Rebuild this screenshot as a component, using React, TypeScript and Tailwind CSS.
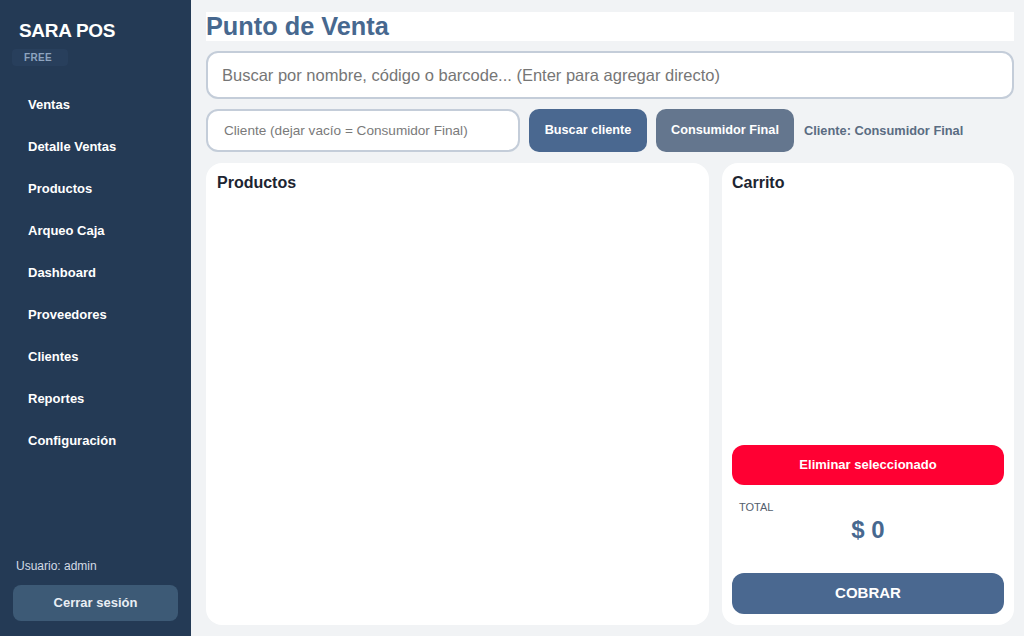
import { useState } from "react";

const NAV = [
  "Ventas",
  "Detalle Ventas",
  "Productos",
  "Arqueo Caja",
  "Dashboard",
  "Proveedores",
  "Clientes",
  "Reportes",
  "Configuración",
];

function Sidebar() {
  return (
    <aside className="w-[191px] shrink-0 bg-[#243a55] flex flex-col h-full">
      <div className="pl-[19px] pt-[20px]">
        <h1 className="text-[19px] leading-[22px] font-bold text-white tracking-[-0.3px]">
          SARA POS
        </h1>
        <span className="inline-block mt-[7px] -ml-[7px] pl-[12px] pr-[16px] py-[1px] rounded bg-[#283f5c] text-[10px] font-bold text-[#8ea4bf] tracking-[0.3px]">
          FREE
        </span>
      </div>

      {/* navigation */}
      <nav className="mt-[16px] flex flex-col">
        {NAV.map((item) => (
          <a
            key={item}
            className="pl-[28px] h-[42px] flex items-center text-[13px] font-bold text-white cursor-pointer"
          >
            {item}
          </a>
        ))}
      </nav>

      <div className="mt-auto px-[13px] pb-[15px]">
        <p className="pl-[3px] text-[12px] text-[#d3dbe5] leading-[14px]">Usuario: admin</p>
        <button className="mt-[12px] w-[165px] h-[36px] rounded-lg bg-[#3d5a76] text-[13px] font-bold text-[#e9eef4]">
          Cerrar sesión
        </button>
      </div>
    </aside>
  );
}

export default function App() {
  const [query, setQuery] = useState("");
  const [cliente, setCliente] = useState("");

  return (
    <div
      className="flex w-[1024px] h-[636px] bg-[#f1f3f5] overflow-hidden"
      style={{ fontFamily: '"Liberation Sans", Arial, sans-serif' }}
    >
      <Sidebar />

      <main className="flex-1 flex flex-col pl-[15px] pr-[10px] pt-[12px] pb-[11px] min-w-0">
        <div className="h-[29px] bg-white flex items-center">
          <h2 className="text-[25.3px] font-bold text-[#47688f] leading-none">Punto de Venta</h2>
        </div>

        <input
          value={query}
          onChange={(e) => setQuery(e.target.value)}
          placeholder="Buscar por nombre, código o barcode... (Enter para agregar directo)"
          className="mt-[10px] h-[48px] w-full rounded-xl border-2 border-[#c4cdd9] bg-white px-[14px] text-[16.5px] text-[#333] placeholder:text-[#767676] outline-none"
        />

        <div className="mt-[10px] flex items-center h-[43px]">
          <input
            value={cliente}
            onChange={(e) => setCliente(e.target.value)}
            placeholder="Cliente (dejar vacío = Consumidor Final)"
            className="w-[314px] h-[43px] rounded-xl border-2 border-[#c4cdd9] bg-white px-[16px] text-[13.6px] text-[#333] placeholder:text-[#7a7a7a] outline-none"
          />
          <button className="ml-[9px] w-[118px] h-[43px] rounded-[10px] bg-[#4a6890] text-white text-[12.7px] font-bold">
            Buscar cliente
          </button>
          <button className="ml-[9px] w-[138px] h-[43px] rounded-[10px] bg-[#64768e] text-white text-[12.7px] font-bold">
            Consumidor Final
          </button>
          <span className="ml-[10px] text-[12.8px] font-bold text-[#5a6c82]">
            Cliente: Consumidor Final
          </span>
        </div>

        <div className="mt-[11px] flex-1 flex gap-[13px] min-h-0">
          {/* product list */}
          <section className="w-[503px] bg-white rounded-2xl px-[11px] pt-[11px]">
            <h3 className="text-[16px] font-bold text-[#1d2531] leading-[18px]">Productos</h3>
          </section>

          {/* cart */}
          <section className="flex-1 bg-white rounded-2xl px-[10px] pt-[11px] pb-[11px] flex flex-col">
            <h3 className="text-[16px] font-bold text-[#1d2531] leading-[18px]">Carrito</h3>
            <div className="flex-1" />
            <button className="h-[40px] w-full rounded-xl bg-[#ff0033] text-white text-[13px] font-bold">
              Eliminar seleccionado
            </button>
            <p className="mt-[16px] pl-[7px] text-[11px] leading-[13px] text-[#535e6d]">TOTAL</p>
            <p className="mt-[3px] text-center text-[24px] leading-[26px] font-bold text-[#47688f]">
              $ 0
            </p>
            <button className="mt-[30px] h-[41px] w-full rounded-xl bg-[#4a6890] text-white text-[15px] font-bold">
              COBRAR
            </button>
          </section>
        </div>
      </main>
    </div>
  );
}
